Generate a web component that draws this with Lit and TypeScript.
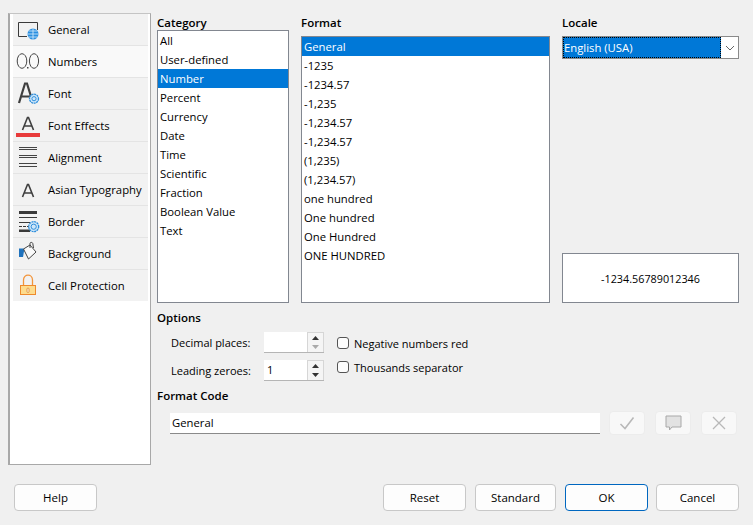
import { LitElement, html, svg, css } from "lit";
import { customElement } from "lit/decorators.js";

const gear = (cx: number, cy: number, r = 4.500) => svg`
  <circle cx=${cx} cy=${cy} r=${r} fill="#cfe6f8" stroke="#2f8fdc" stroke-width="1.300" stroke-dasharray="2 0.600"></circle>
  <circle cx=${cx} cy=${cy} r=${r - 2.400} fill="none" stroke="#2f8fdc" stroke-width="1"></circle>`;

const icons: Record<string, unknown> = {
  general: html`<svg viewBox="0 0 30 28" class="ic">
    <path d="M14 20.500H5.500V6.500H24.500V14" fill="none" stroke="#3a3a3a" stroke-width="1"></path>
    <circle cx="20" cy="18" r="5.500" fill="#2a8fe0"></circle>
    <path d="M14.500 18H25.500M20 12.500V23.500M15.500 15H24.500M15.500 21H24.500" stroke="#d8eefc" stroke-width="0.800"></path>
  </svg>`,
  numbers: html`<svg viewBox="0 0 30 28" class="ic">
    <ellipse cx="9" cy="13" rx="4.800" ry="7.300" fill="none" stroke="#444" stroke-width="1"></ellipse>
    <ellipse cx="21" cy="13" rx="4.600" ry="7.300" fill="none" stroke="#444" stroke-width="1"></ellipse>
    <rect x="14" y="19" width="1.500" height="1.500" fill="#444"></rect>
  </svg>`,
  font: html`<svg viewBox="0 0 30 28" class="ic">
    <path d="M6 23L12 3.500H14L20 23M8 16.500H18" fill="none" stroke="#3f3f3f" stroke-width="2.200"></path>
    ${gear(21, 18.700)}
  </svg>`,
  effects: html`<svg viewBox="0 0 30 28" class="ic">
    <path d="M9.500 18L14.500 5.500H15.500L20.500 18M11 14H19" fill="none" stroke="#3f3f3f" stroke-width="1.600"></path>
    <rect x="3" y="21" width="24" height="4" fill="#e83a3a"></rect>
  </svg>`,
  align: html`<svg viewBox="0 0 30 28" class="ic">
    <path d="M6 3.500H24M6 5.500H24M6 11.500H24M6 13.500H24M6 19.500H24M6 22.500H24" stroke="#444" stroke-width="1"></path>
  </svg>`,
  asian: html`<svg viewBox="0 0 30 28" class="ic">
    <path d="M9.500 21L14.500 8.500H15.500L20.500 21M11 17H19" fill="none" stroke="#3f3f3f" stroke-width="1.600"></path>
  </svg>`,
  border: html`<svg viewBox="0 0 30 28" class="ic">
    <rect x="6" y="3" width="18" height="3" fill="#3a3a3a"></rect>
    <path d="M6 9.500H24M6 14.500H17" stroke="#3a3a3a" stroke-width="1"></path>
    <path d="M6 18.500H16" stroke="#3a3a3a" stroke-width="1" stroke-dasharray="3 1"></path>
    <rect x="6" y="21.500" width="11" height="2.500" fill="#3a3a3a"></rect>
    ${gear(20.700, 18.700, 5)}
  </svg>`,
  background: html`<svg viewBox="0 0 30 28" class="ic">
    <path d="M6 17V8.500H11.500L10 17Z" fill="#1f72bd"></path>
    <path d="M10.500 9L17 5L23 12L15.500 19Z" fill="#fafafa" stroke="#444" stroke-width="1"></path>
    <path d="M17 8V3.500C17 2 19.500 2 19.800 3.500L20.500 8" fill="none" stroke="#444" stroke-width="1"></path>
  </svg>`,
  lock: html`<svg viewBox="0 0 30 28" class="ic">
    <path d="M10.500 13V8C10.500 1.500 19.500 1.500 19.500 8V13" fill="none" stroke="#f2953c" stroke-width="1.300"></path>
    <rect x="7.500" y="13.500" width="15" height="9" fill="#fddc8e" stroke="#ee8a2c" stroke-width="1"></rect>
    <rect x="14" y="16" width="2" height="4.500" rx="1" fill="#fff3dc" stroke="#d57d27" stroke-width="0.700"></rect>
  </svg>`,
};

const tabs = [
  ["general", "General"], ["numbers", "Numbers"], ["font", "Font"], ["effects", "Font Effects"],
  ["align", "Alignment"], ["asian", "Asian Typography"], ["border", "Border"],
  ["background", "Background"], ["lock", "Cell Protection"],
];
const cats = ["All", "User-defined", "Number", "Percent", "Currency", "Date", "Time", "Scientific", "Fraction", "Boolean Value", "Text"];
const formats = ["General", "-1235", "-1234.57", "-1,235", "-1,234.57", "-1,234.57", "(1,235)", "(1,234.57)", "one hundred", "One hundred", "One Hundred", "ONE HUNDRED"];

@customElement("app-root")
export class AppRoot extends LitElement {
  static styles = css`
    :host { display: block; width: 753px; height: 525px; background: #f0f0f0; color: #000;
      font-family: "Open Sans", "Noto Sans", sans-serif; font-size: 11.3px; overflow: hidden; }
    .main { display: flex; padding: 12px 14px 0 8px; gap: 6px; }
    .side { flex: none; width: 143px; height: 452px; margin-top: 1px; box-sizing: border-box; background: #fff;
      border: 1px solid #a8a8a8; border-top-color: #c4c4c4; border-left-width: 2px; padding: 0 2px 0 3px;
      display: flex; flex-direction: column; }
    .tab { height: 32px; box-sizing: border-box; background: #f2f2f2; border-bottom: 1px solid #e4e4e4;
      display: flex; align-items: center; }
    .tab.on { background: #f9f9f9; }
    .tab.last { border-bottom: none; height: 31px; }
    .ic { width: 30px; height: 28px; flex: none; }
    .tab span { margin-left: 5px; white-space: nowrap; }
    .right { flex: 1; display: flex; flex-direction: column; }
    .top { display: grid; grid-template-columns: 132px 249px 177px; column-gap: 12px; height: 291px; }
    .col { display: flex; flex-direction: column; }
    .title { font-weight: 600; height: 18px; line-height: 22px; font-size: 11.5px; }
    .title.tall { height: 24px; }
    .list { flex: 1; background: #fff; border: 1px solid #828790; box-sizing: border-box; }
    .row { height: 19px; line-height: 19px; padding-left: 2px; white-space: nowrap; }
    .row.sel { background: #0078d7; color: #fff; }
    .select { height: 23px; box-sizing: border-box; border: 1px solid #8a8a8a; display: flex; background: #fff; }
    .select .val { flex: 1; background: #0078d7; color: #fff; line-height: 21px; padding-left: 1px;
      outline: 1px dotted #000; outline-offset: -1px; }
    .select .arrow { width: 17px; display: flex; align-items: center; justify-content: center; }
    .spacer { flex: 1; }
    .preview { height: 50px; box-sizing: border-box; background: #fff; border: 1px solid #828790; display: flex;
      align-items: center; justify-content: center; font-size: 10.800px; }
    .opt-title { margin-top: 6px; line-height: 18px; }
    .opts { display: flex; padding-left: 14px; margin-top: 5px; font-size: 11px; }
    .spins { display: flex; flex-direction: column; gap: 7px; width: 166px; }
    .spinrow { display: flex; align-items: center; height: 21px; }
    .spinrow label { width: 93px; }
    .spin { width: 60px; height: 21px; display: flex; box-sizing: border-box; border-bottom: 1px solid #b5b5b5; }
    .spin .v { width: 43px; background: #fff; line-height: 20px; padding-left: 3px; box-sizing: border-box; }
    .btns { width: 17px; display: flex; flex-direction: column; background: #f5f5f5; border: 1px solid #d6d6d6; border-bottom: none; box-sizing: border-box; }
    .btns i { flex: 1; display: flex; align-items: center; justify-content: center; }
    .checks { display: flex; flex-direction: column; gap: 10px; padding-top: 4px; }
    .check { display: flex; align-items: center; height: 14px; }
    .box { border: 1px solid #555; border-radius: 3px; background: #fdfdfd; margin-right: 5px; box-sizing: border-box; width: 12px; height: 12px; }
    .fc-title { margin-top: 6px; line-height: 18px; }
    .fc { display: flex; align-items: center; padding-left: 13px; margin-top: 6px; height: 24px; }
    .fc .input { width: 430px; height: 21px; box-sizing: border-box; background: #fff; border-bottom: 1px solid #8a8a8a;
      line-height: 20px; padding-left: 2px; margin-right: 9px; }
    .ib { width: 36px; height: 24px; margin-right: 10px; box-sizing: border-box; background: #f8f8f8; border: 1px solid #ececec;
      border-radius: 4px; display: flex; align-items: center; justify-content: center; }
    .foot { display: flex; margin-top: 19px; padding: 0 14px; font-size: 11.500px; }
    .btn { height: 27px; width: 83px; box-sizing: border-box; background: #fdfdfd; border: 1px solid #c8c8c8; border-radius: 4px;
      display: flex; align-items: center; justify-content: center; }
    .btn.ok { border: 1px solid #0067c0; margin-right: 8px; }
    .help { margin-right: 286px; }
    .reset { margin-right: 9px; }
    .std { width: 81px; margin-right: 9px; }
  `;

  private spinBtn(upOff: boolean, downOff: boolean) {
    return html`<div class="btns">
      <i><svg width="7" height="4"><path d="M3.500 0L7 4H0Z" fill=${upOff ? "#aaa" : "#333"}></path></svg></i>
      <i><svg width="7" height="4"><path d="M0 0H7L3.500 4Z" fill=${downOff ? "#aaa" : "#333"}></path></svg></i>
    </div>`;
  }

  render() {
    return html`
      <div class="main">
        <nav class="side">
          ${tabs.map(([k, t], i) => html`<div class="tab ${i === 1 ? "on" : ""} ${i === 8 ? "last" : ""}">${icons[k]}<span>${t}</span></div>`)}
        </nav>
        <div class="right">
          <div class="top">
            <div class="col">
              <div class="title">Category</div>
              <div class="list">${cats.map((c) => html`<div class="row ${c === "Number" ? "sel" : ""}">${c}</div>`)}</div>
            </div>
            <div class="col">
              <div class="title tall">Format</div>
              <div class="list">${formats.map((c, i) => html`<div class="row ${i === 0 ? "sel" : ""}">${c}</div>`)}</div>
            </div>
            <div class="col">
              <div class="title tall">Locale</div>
              <div class="select"><div class="val">English (USA)</div>
                <div class="arrow"><svg width="10" height="6"><path d="M1 1L5 5L9 1" fill="none" stroke="#666"></path></svg></div></div>
              <div class="spacer"></div>
              <div class="preview">-1234.56789012346</div>
            </div>
          </div>
          <div class="title opt-title">Options</div>
          <div class="opts">
            <div class="spins">
              <div class="spinrow"><label>Decimal places:</label><div class="spin"><div class="v"></div>${this.spinBtn(false, true)}</div></div>
              <div class="spinrow"><label>Leading zeroes:</label><div class="spin"><div class="v">1</div>${this.spinBtn(false, false)}</div></div>
            </div>
            <div class="checks">
              <div class="check"><div class="box"></div>Negative numbers red</div>
              <div class="check"><div class="box"></div>Thousands separator</div>
            </div>
          </div>
          <div class="title fc-title">Format Code</div>
          <div class="fc">
            <div class="input">General</div>
            <div class="ib"><svg width="16" height="14"><path d="M1.500 8L6 12.500L14.500 1.500" fill="none" stroke="#b8b8b8" stroke-width="1.600"></path></svg></div>
            <div class="ib"><svg width="17" height="16"><path d="M1 1H16V12H7L4.500 15V12H1Z" fill="#e2e2e2" stroke="#a8a8a8"></path></svg></div>
            <div class="ib"><svg width="14" height="14"><path d="M1 1L13 13M13 1L1 13" stroke="#b8b8b8" stroke-width="1.300"></path></svg></div>
          </div>
        </div>
      </div>
      <div class="foot">
        <div class="btn help">Help</div>
        <div class="btn reset">Reset</div>
        <div class="btn std">Standard</div>
        <div class="btn ok">OK</div>
        <div class="btn">Cancel</div>
      </div>
    `;
  }
}
